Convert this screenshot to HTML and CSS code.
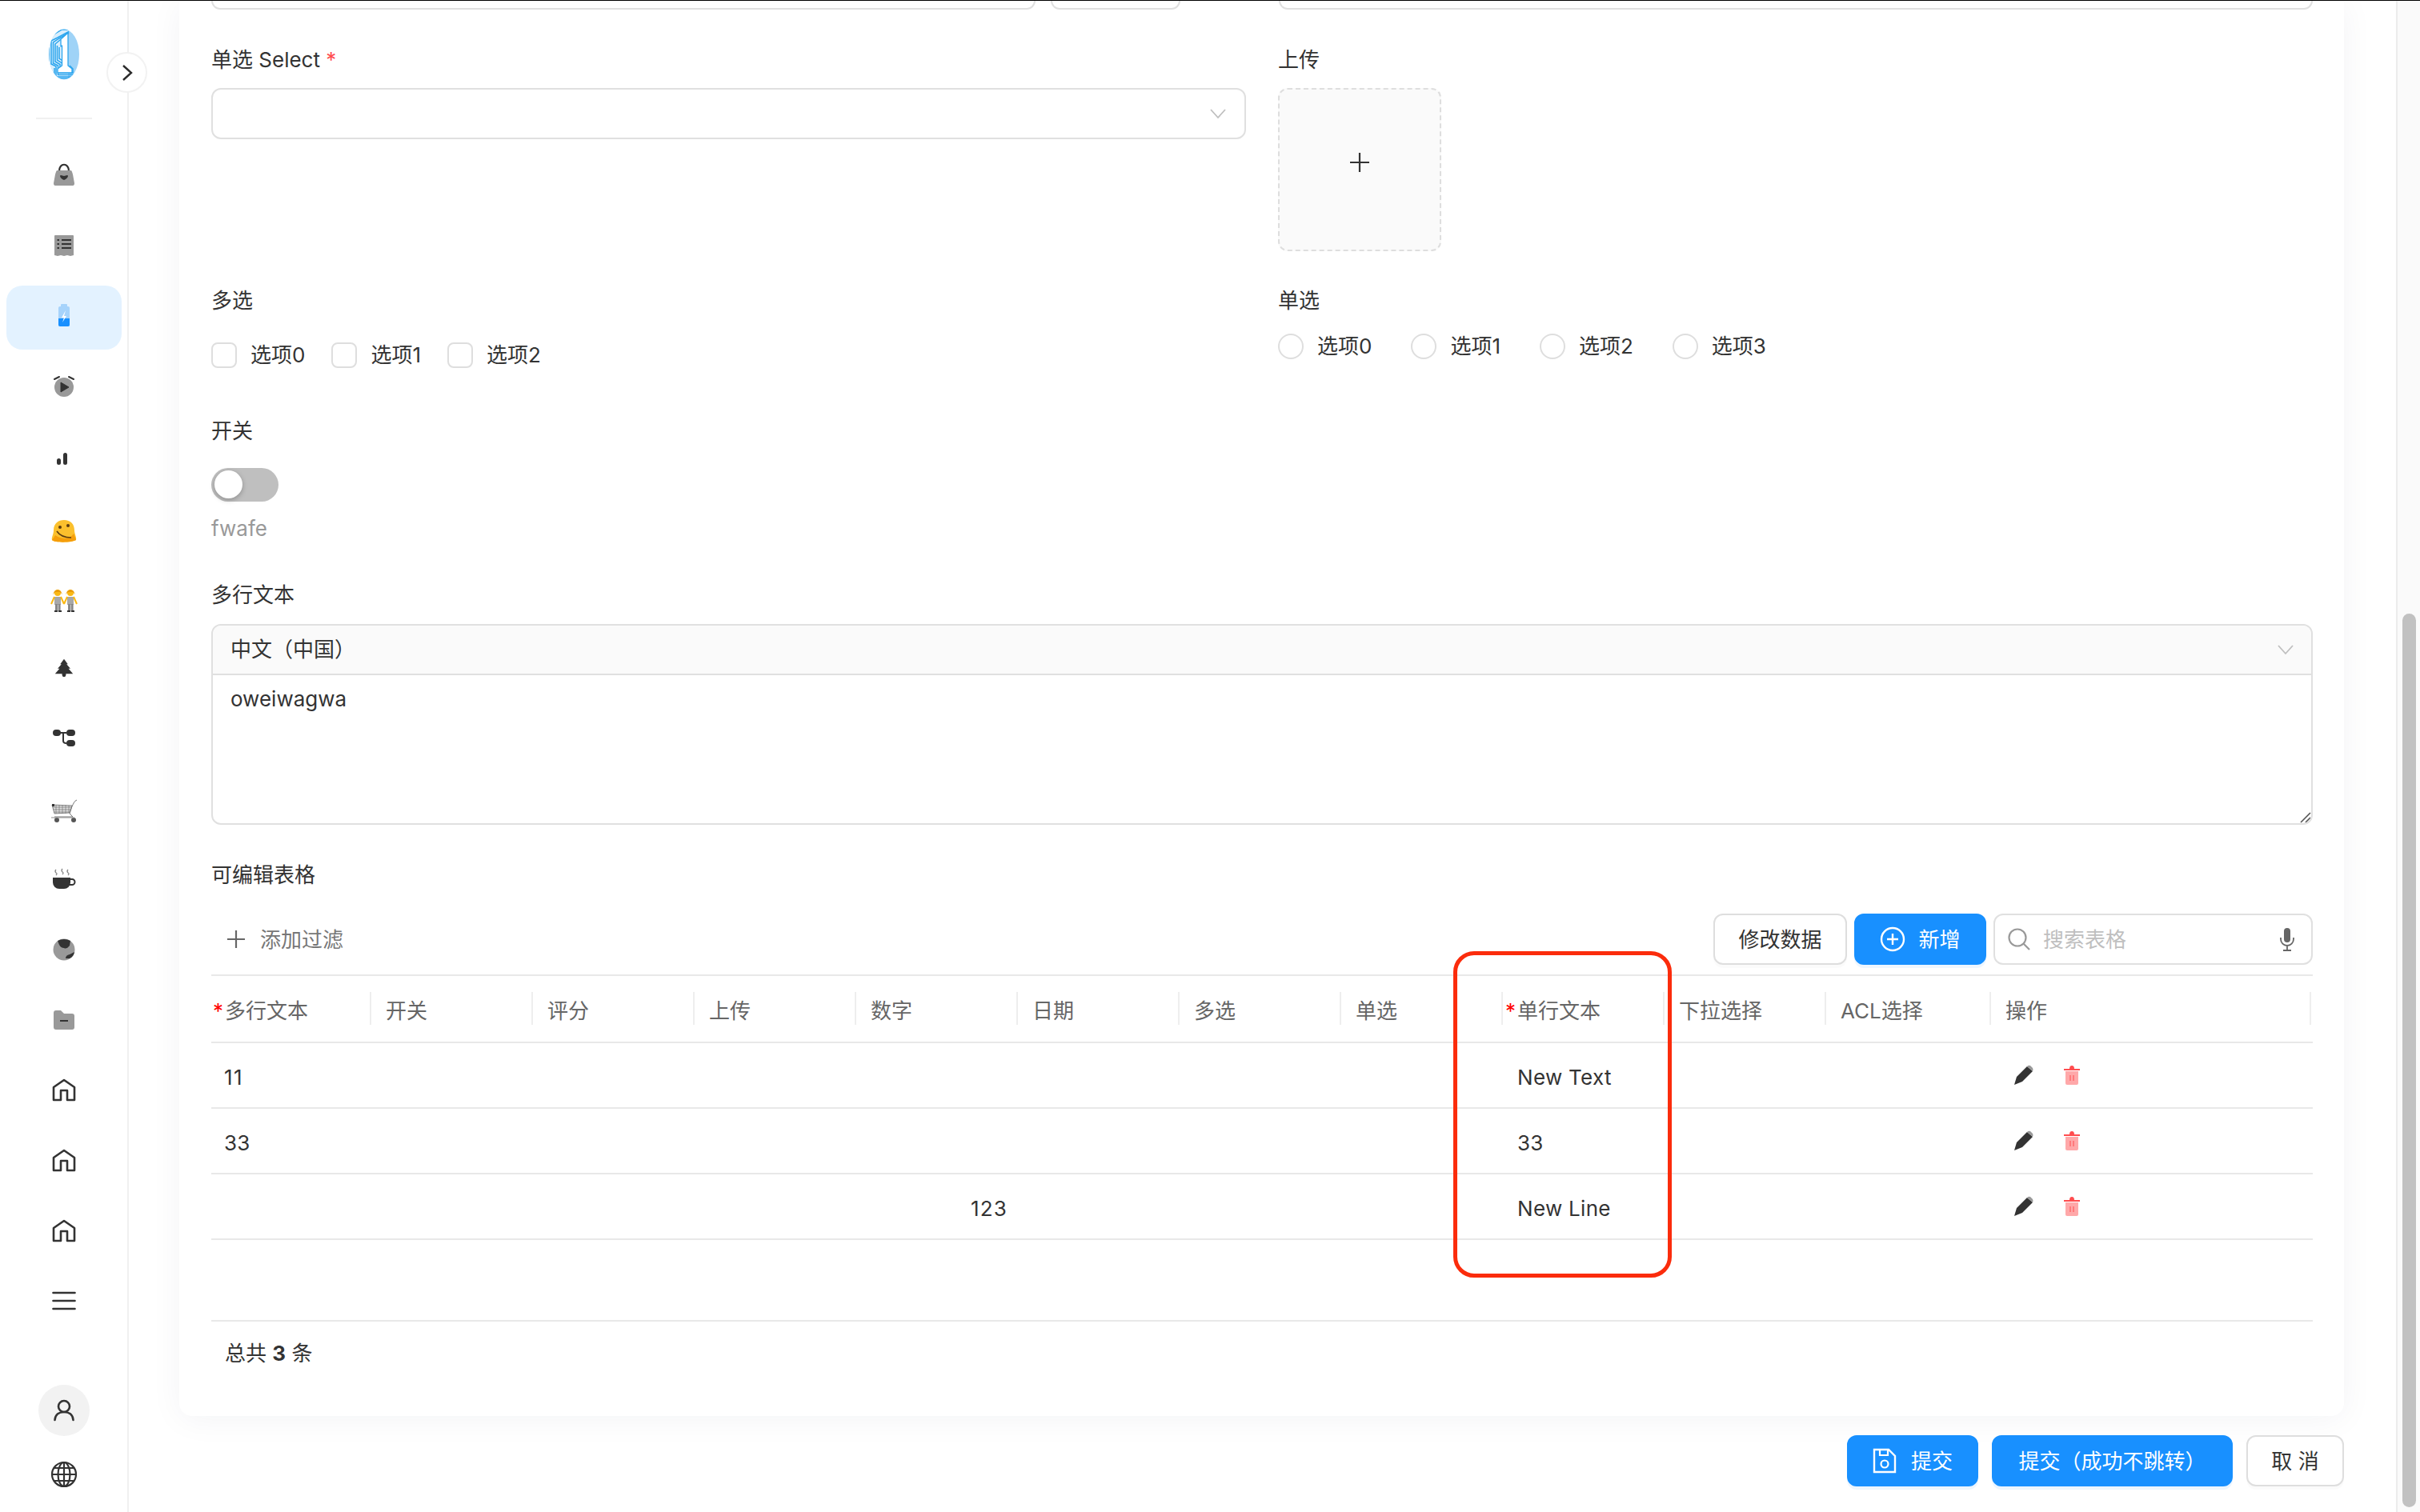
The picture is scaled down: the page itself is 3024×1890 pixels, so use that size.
FILE: index.html
```html
<!DOCTYPE html>
<html lang="zh-CN">
<head>
<meta charset="utf-8">
<title>表单</title>
<link rel="stylesheet" href="styles.css">
</head>
<body>
<div class="page">
  <aside class="sidebar">
    <div class="logo">
      <svg width="38" height="64" viewBox="0 0 38 64">
        <defs><clipPath id="logo-clip"><ellipse cx="19" cy="32" rx="19" ry="31.500"/></clipPath></defs>
        <g clip-path="url(#logo-clip)">
          <rect width="38" height="64" fill="#9fd3f7"/>
          <path d="M0 0 H24 V64 H0Z" fill="#d9eefc"/>
          <g fill="none" stroke="#2aa5ee" stroke-width="1.500">
            <path d="M27 1 H16 L1 10"/>
            <path d="M25 3.500 L11 11 L3 15 V44 L9 47 V60 H34"/>
            <path d="M25 5 L13 12 L5.500 17 V43 L11.500 46 V57.500 H32"/>
            <path d="M24 7 L14 14 L8 19 V41 L14 44.500 V55 H30 V50 L26 46"/>
            <path d="M10.500 21 V39 L16.500 43 V53 H28 V49"/>
            <path d="M13 23 V37 L19 41"/>
            <path d="M0 12 V42 M7 49 V62 H30"/>
          </g>
          <path d="M24 5 L15 13 V22 L16.500 21 V46 L11 50 V55 H29 V50 L24 46Z" fill="#fff" stroke="#2aa5ee" stroke-width="1.300" stroke-linejoin="round"/>
        </g>
      </svg>
    </div>
    <div class="side-divider"></div>
    <nav class="side-nav">
      <a class="side-item">
        <svg width="28" height="32" viewBox="0 0 28 32"><path d="M8 11 C8 0 20 0 20 11" fill="none" stroke="#333" stroke-width="2.200"/><path d="M6 10 H22 C24 10 24 12 25 15 L27 26 Q27 29 25 29 H3 Q1 29 1 26 L3 15 C4 12 4 10 6 10Z" fill="#999"/><path d="M14 22 C9 20 8 16 10 16 L14 17 L18 16 C20 16 19 20 14 22Z" fill="#333"/></svg>
      </a>
      <a class="side-item">
        <svg width="26" height="28" viewBox="0 0 26 28"><path d="M2 1 H24 Q25 1 25 2 V26 L21 27 L17 26 L13 27 L9 26 L5 27 L1 26 V2 Q1 1 2 1Z" fill="#999"/><path d="M10 7 H22 M10 12 H22 M10 17 H22" stroke="#333" stroke-width="2"/><path d="M4.500 7 H7 M4.500 12 H7 M4.500 17 H7" stroke="#333" stroke-width="2"/></svg>
      </a>
      <a class="side-item side-active">
        <svg width="30" height="34" viewBox="0 0 30 34"><rect x="11" y="2" width="8" height="5" rx="1" fill="#a6d3fb"/><rect x="8" y="5" width="14" height="25" rx="2" fill="#a6d3fb"/><path d="M8 20 H22 V28 A2 2 0 0 1 20 30 H10 A2 2 0 0 1 8 28Z" fill="#1890ff"/><path d="M17 10 L12 19 H15 L13 25 L18 17 H15Z" fill="#fff"/></svg>
      </a>
      <a class="side-item">
        <svg width="30" height="30" viewBox="0 0 30 30"><circle cx="15" cy="16" r="12" fill="#999"/><path d="M3 6 L9 3 M27 6 L21 3" stroke="#333" stroke-width="2" stroke-linecap="round"/><path d="M11 10 L21 16 L11 22Z" fill="#333" stroke="#333" stroke-linejoin="round"/></svg>
      </a>
      <a class="side-item">
        <svg width="30" height="30" viewBox="0 0 30 30"><rect x="6" y="17" width="5" height="8" rx="2.500" fill="#333"/><rect x="14" y="10" width="5" height="15" rx="2.500" fill="#333"/></svg>
      </a>
      <a class="side-item">
        <svg width="34" height="40" viewBox="0 -10 34 40"><path d="M4 14 C4 5 10 1 17 1 C25 1 30 6 30 14 C30 18 33 23 32 26 C28 29 6 30 2 26 C1 23 4 19 4 14Z" fill="#fbc02d"/><path d="M6 20 C4 24 2 25 2 26 C6 30 28 29 32 26 C32 24 30 21 29 18 C24 26 12 25 6 20Z" fill="#f59e0b"/><circle cx="12" cy="10" r="2" fill="#5c3c10"/><circle cx="22" cy="8" r="2" fill="#5c3c10"/><path d="M8 15 C12 21 20 23 26 23" fill="none" stroke="#5c3c10" stroke-width="1.600"/></svg>
      </a>
      <a class="side-item">
        <svg width="34" height="40" viewBox="0 -8 34 40"><circle cx="9" cy="6" r="4" fill="#fbb914"/><path d="M3 8 L5 4 L9 2 L13 4 L15 8 L12 5 H6Z" fill="#e89a0c"/><rect x="5" y="11" width="8" height="10" fill="#a8a8a8"/><rect x="6" y="20" width="3" height="9" fill="#888"/><rect x="9.600" y="20" width="3" height="9" fill="#888"/><rect x="5" y="28" width="4" height="2" fill="#333"/><rect x="10" y="28" width="4" height="2" fill="#333"/><path d="M5 11 L1 20 M13 11 L17 20" stroke="#fbb914" stroke-width="2"/><g transform="translate(16)"><circle cx="9" cy="6" r="4" fill="#fbb914"/><path d="M3 8 L5 4 L9 2 L13 4 L15 8 L12 5 H6Z" fill="#e89a0c"/><rect x="5" y="11" width="8" height="10" fill="#a8a8a8"/><rect x="6" y="20" width="3" height="9" fill="#888"/><rect x="9.600" y="20" width="3" height="9" fill="#888"/><rect x="5" y="28" width="4" height="2" fill="#333"/><rect x="10" y="28" width="4" height="2" fill="#333"/><path d="M5 11 L1 20 M13 11 L17 20" stroke="#fbb914" stroke-width="2"/></g></svg>
      </a>
      <a class="side-item">
        <svg width="24" height="26" viewBox="0 0 30 30"><path d="M15 1 L21 9 H19 L25 16 H22 L29 24 H18 V26 A3 3 0 0 1 12 26 V24 H1 L8 16 H5 L11 9 H9Z" fill="#333"/></svg>
      </a>
      <a class="side-item">
        <svg width="30" height="30" viewBox="0 0 30 30"><rect x="1" y="4" width="10" height="8" rx="4" fill="#333"/><rect x="18" y="4" width="11" height="8" rx="4" fill="#333"/><rect x="18" y="17" width="11" height="8" rx="4" fill="#333"/><path d="M10 8 H18 M14 8 V18 Q14 21 18 21" fill="none" stroke="#333" stroke-width="2"/></svg>
      </a>
      <a class="side-item">
        <svg width="34" height="38" viewBox="0 -8 34 38"><path d="M33 0 C30 1 29 4 27 8 L24 17 L28 21 H5" fill="none" stroke="#777" stroke-width="1"/><path d="M2 6 L27 7 L24 16 L5 17Z" fill="#ddd" stroke="#666" stroke-width=".8"/><path d="M7 6 V17 M11 6 V17 M15 6 V17 M19 6 V17 M23 7 V16 M3 9 H26 M4 12 H25 M4 15 H24" stroke="#777" stroke-width=".7"/><rect x="2" y="5" width="3" height="3" fill="#333"/><circle cx="8" cy="25" r="3" fill="#555"/><circle cx="29" cy="25" r="3" fill="#555"/><path d="M1 22 H30" stroke="#888"/></svg>
      </a>
      <a class="side-item">
        <svg width="30" height="32" viewBox="0 0 30 32"><path d="M5 4 Q3 6 5 8 Q7 9 5 11 M13 3 Q11 5 13 7 Q15 8 13 10 M20 4 Q18 6 20 8 Q22 9 20 11" fill="none" stroke="#888" stroke-width="1.300"/><path d="M1 14 H23 V20 A8 8 0 0 1 15 28 H9 A8 8 0 0 1 1 20Z" fill="#333"/><path d="M23 16 H25 A3.500 3.500 0 0 1 25 23 H20" fill="none" stroke="#333" stroke-width="2"/></svg>
      </a>
      <a class="side-item">
        <svg width="30" height="30" viewBox="0 0 30 30"><circle cx="15" cy="15" r="13.500" fill="#999"/><path d="M7 4 Q15 0 23 4 L22 10 Q18 15 15 13 Q11 13 9 9Z" fill="#333"/><path d="M17 26 Q17 22 22 21 L28 18 Q27 24 22 26Z" fill="#333"/></svg>
      </a>
      <a class="side-item">
        <svg width="30" height="30" viewBox="0 0 30 30"><path d="M2 6 A3 3 0 0 1 5 3 H11 L15 7 H25 A3 3 0 0 1 28 10 V24 A3 3 0 0 1 25 27 H5 A3 3 0 0 1 2 24Z" fill="#999"/><path d="M10 16 H20" stroke="#333" stroke-width="2"/></svg>
      </a>
      <a class="side-item"><svg width="30" height="30" viewBox="0 0 30 30"><path d="M2 27 V11 L15 2 L28 11 V27 H19 V15 H11 V27Z" fill="none" stroke="#333" stroke-width="2.600" stroke-linejoin="round"/></svg></a>
      <a class="side-item"><svg width="30" height="30" viewBox="0 0 30 30"><path d="M2 27 V11 L15 2 L28 11 V27 H19 V15 H11 V27Z" fill="none" stroke="#333" stroke-width="2.600" stroke-linejoin="round"/></svg></a>
      <a class="side-item"><svg width="30" height="30" viewBox="0 0 30 30"><path d="M2 27 V11 L15 2 L28 11 V27 H19 V15 H11 V27Z" fill="none" stroke="#333" stroke-width="2.600" stroke-linejoin="round"/></svg></a>
      <a class="side-item"><svg width="30" height="30" viewBox="0 0 30 30"><path d="M1.500 4 H28.500 M1.500 14 H28.500 M1.500 24 H28.500" stroke="#333" stroke-width="2.600" stroke-linecap="round"/></svg></a>
    </nav>
    <div class="side-bottom">
      <div class="avatar"><svg width="28" height="28" viewBox="0 0 28 28"><circle cx="14" cy="9" r="7" fill="none" stroke="#333" stroke-width="2.600"/><path d="M2.500 26 C3 19 8 16 14 16 C20 16 25 19 25.500 26" fill="none" stroke="#333" stroke-width="2.600" stroke-linecap="round"/></svg></div>
      <svg width="34" height="34" viewBox="0 0 34 34"><g fill="none" stroke="#333" stroke-width="2.200"><circle cx="17" cy="17" r="15"/><ellipse cx="17" cy="17" rx="7.500" ry="15"/><path d="M17 2 V32 M2 17 H32 M5 9 H29 M5 25 H29"/></g></svg>
    </div>
  </aside>
  <button class="collapse" type="button" aria-label="展开"><svg width="18" height="24" viewBox="0 0 18 24"><path d="M4 3 L14 12 L4 21" fill="none" stroke="#2b2b2b" stroke-width="2.400"/></svg></button>

  <main class="main">
    <section class="card">
      <div class="clip-row">
        <div class="clip-input clip-a"></div>
        <div class="clip-input clip-b"></div>
        <div class="clip-input clip-c"></div>
      </div>

      <div class="two-col row-select">
        <div>
          <div class="label lb-select">单选 Select <span class="req">*</span></div>
          <div class="select"><svg width="22" height="14" viewBox="0 0 22 14"><path d="M2 2 L11 12 L20 2" fill="none" stroke="#bfbfbf" stroke-width="1.800"/></svg></div>
        </div>
        <div>
          <div class="label lb-select">上传</div>
          <div class="upload"><svg width="24" height="24" viewBox="0 0 24 24"><path d="M12 0 V24 M0 12 H24" stroke="#333" stroke-width="2.200"/></svg></div>
        </div>
      </div>

      <div class="two-col row-choice">
        <div>
          <div class="label">多选</div>
          <div class="checks">
            <label class="opt"><span class="check"></span>选项0</label>
            <label class="opt"><span class="check"></span>选项1</label>
            <label class="opt"><span class="check"></span>选项2</label>
          </div>
        </div>
        <div>
          <div class="label">单选</div>
          <div class="radios">
            <label class="opt"><span class="radio"></span>选项0</label>
            <label class="opt"><span class="radio"></span>选项1</label>
            <label class="opt"><span class="radio"></span>选项2</label>
            <label class="opt"><span class="radio"></span>选项3</label>
          </div>
        </div>
      </div>

      <div class="label lb-switch">开关</div>
      <div class="switch"><span class="knob"></span></div>
      <div class="hint">fwafe</div>

      <div class="label lb-text">多行文本</div>
      <div class="editor">
        <div class="editor-head"><span>中文（中国）</span><svg width="22" height="14" viewBox="0 0 22 14"><path d="M2 2 L11 12 L20 2" fill="none" stroke="#bfbfbf" stroke-width="1.800"/></svg></div>
        <div class="editor-body">oweiwagwa<svg class="grip" width="16" height="16" viewBox="0 0 16 16"><path d="M15 3 L3 15 M15 9 L9 15" stroke="#555" stroke-width="1.600"/></svg></div>
      </div>

      <div class="label lb-table">可编辑表格</div>
      <div class="toolbar">
        <div class="filter"><svg width="24" height="24" viewBox="0 0 24 24"><path d="M12 1 V23 M1 12 H23" stroke="#666" stroke-width="2.200"/></svg><span>添加过滤</span></div>
        <div class="tools">
          <button class="btn btn-edit" type="button">修改数据</button>
          <button class="btn btn-primary btn-new" type="button"><svg width="32" height="32" viewBox="0 0 32 32"><circle cx="16" cy="16" r="14" fill="none" stroke="#fff" stroke-width="2.400"/><path d="M16 9 V23 M9 16 H23" stroke="#fff" stroke-width="2.400"/></svg>新增</button>
          <div class="search">
            <svg width="30" height="30" viewBox="0 0 30 30"><circle cx="13" cy="13" r="10.500" fill="none" stroke="#999" stroke-width="2.200"/><path d="M20.500 20.500 L28 28" stroke="#999" stroke-width="2.200"/></svg>
            <span class="placeholder">搜索表格</span>
            <svg width="22" height="30" viewBox="0 0 22 30"><rect x="7" y="1" width="8" height="18" rx="4" fill="#666"/><path d="M3 13 V15 A8 8 0 0 0 19 15 V13 M11 23 V28 M6 29 H16" fill="none" stroke="#666" stroke-width="1.800"/></svg>
          </div>
        </div>
      </div>

      <div class="table">
        <div class="thead">
          <div class="th"><span class="star">*</span>多行文本</div>
          <div class="th">开关</div>
          <div class="th">评分</div>
          <div class="th">上传</div>
          <div class="th">数字</div>
          <div class="th">日期</div>
          <div class="th">多选</div>
          <div class="th">单选</div>
          <div class="th"><span class="star">*</span>单行文本</div>
          <div class="th">下拉选择</div>
          <div class="th">ACL选择</div>
          <div class="th">操作</div>
        </div>
        <div class="tr">
          <div class="td td-digits">11</div><div class="td"></div><div class="td"></div><div class="td"></div><div class="td"></div><div class="td"></div><div class="td"></div><div class="td"></div>
          <div class="td">New Text</div><div class="td"></div><div class="td"></div>
          <div class="td-ops">
            <svg width="26" height="26" viewBox="0 0 26 26"><path d="M1 25 L4 15 L17 2 L24 8 L11 21Z" fill="#333"/><path d="M17 2 Q19 0 21 1 L24 4 Q25 6 24 8Z" fill="#999"/></svg>
            <svg width="22" height="26" viewBox="0 0 22 26"><path d="M8 5 Q8 1 11 1 Q14 1 14 5Z" fill="#ff4d4f"/><path d="M1 6 H21" stroke="#ff4d4f" stroke-width="2"/><path d="M3 8 H19 V23 Q19 25 17 25 H5 Q3 25 3 23Z" fill="#ffa8a9"/><path d="M9 13 V20 M13 13 V20" stroke="#ff4d4f" stroke-width="1"/></svg>
          </div>
        </div>
        <div class="tr">
          <div class="td">33</div><div class="td"></div><div class="td"></div><div class="td"></div><div class="td"></div><div class="td"></div><div class="td"></div><div class="td"></div>
          <div class="td">33</div><div class="td"></div><div class="td"></div>
          <div class="td-ops">
            <svg width="26" height="26" viewBox="0 0 26 26"><path d="M1 25 L4 15 L17 2 L24 8 L11 21Z" fill="#333"/><path d="M17 2 Q19 0 21 1 L24 4 Q25 6 24 8Z" fill="#999"/></svg>
            <svg width="22" height="26" viewBox="0 0 22 26"><path d="M8 5 Q8 1 11 1 Q14 1 14 5Z" fill="#ff4d4f"/><path d="M1 6 H21" stroke="#ff4d4f" stroke-width="2"/><path d="M3 8 H19 V23 Q19 25 17 25 H5 Q3 25 3 23Z" fill="#ffa8a9"/><path d="M9 13 V20 M13 13 V20" stroke="#ff4d4f" stroke-width="1"/></svg>
          </div>
        </div>
        <div class="tr">
          <div class="td"></div><div class="td"></div><div class="td"></div><div class="td"></div><div class="td td-num">123</div><div class="td"></div><div class="td"></div><div class="td"></div>
          <div class="td">New Line</div><div class="td"></div><div class="td"></div>
          <div class="td-ops">
            <svg width="26" height="26" viewBox="0 0 26 26"><path d="M1 25 L4 15 L17 2 L24 8 L11 21Z" fill="#333"/><path d="M17 2 Q19 0 21 1 L24 4 Q25 6 24 8Z" fill="#999"/></svg>
            <svg width="22" height="26" viewBox="0 0 22 26"><path d="M8 5 Q8 1 11 1 Q14 1 14 5Z" fill="#ff4d4f"/><path d="M1 6 H21" stroke="#ff4d4f" stroke-width="2"/><path d="M3 8 H19 V23 Q19 25 17 25 H5 Q3 25 3 23Z" fill="#ffa8a9"/><path d="M9 13 V20 M13 13 V20" stroke="#ff4d4f" stroke-width="1"/></svg>
          </div>
        </div>
      </div>
      <div class="total">总共 <b>3</b> 条</div>
    </section>

    <div class="actions">
      <button class="btn btn-primary btn-save" type="button"><svg width="30" height="32" viewBox="0 0 30 32"><path d="M2 2 H20 L28 10 V30 H2Z" fill="none" stroke="#fff" stroke-width="2.400"/><path d="M9 2 V9 H19 V2" fill="none" stroke="#fff" stroke-width="2.200"/><circle cx="15" cy="20" r="4.500" fill="none" stroke="#fff" stroke-width="2.200"/></svg>提交</button>
      <button class="btn btn-primary btn-wide" type="button">提交（成功不跳转）</button>
      <button class="btn btn-cancel" type="button">取 消</button>
    </div>
  </main>
  <div class="scrollbar"><div class="thumb"></div></div>
  <div class="annotation"></div>
</div>
</body>
</html>
```
FILE: styles.css
```css
* { box-sizing: border-box; }
html, body { margin: 0; height: 100%; background: #fff; overflow: hidden; }
body {
  font-family: Inter, "Noto Sans CJK SC", "Noto Sans", sans-serif;
  font-size: 26px;
  line-height: 36px;
  color: #333;
}
button { font: inherit; cursor: pointer; }
.page {
  position: relative;
  display: flex;
  height: 1890px;
  width: 3024px;
  border-top: 1px solid #000;
  overflow: hidden;
}

/* sidebar */
.sidebar {
  width: 161px;
  flex: none;
  display: flex;
  flex-direction: column;
  align-items: center;
  background: #fff;
  border-right: 2px solid #f0f0f0;
  padding-bottom: 30px;
}
.logo { height: 64px; margin-top: 35px; }
.logo svg { display: block; }
.side-divider { width: 70px; height: 2px; background: #f0f0f0; margin-top: 47px; }
.side-nav { display: flex; flex-direction: column; margin-top: 26px; width: 100%; }
.side-item { height: 88px; display: flex; align-items: center; justify-content: center; width: 144px; margin-left: 8px; border-radius: 20px; }
.side-active { background: #e3f2ff; height: 80px; margin: 6px 0 2px 8px; padding-bottom: 4px; }
.side-bottom { margin-top: auto; display: flex; flex-direction: column; align-items: center; gap: 31px; }
.side-bottom svg { display: block; }
.avatar { width: 64px; height: 64px; border-radius: 50%; background: #f2f2f2; display: flex; align-items: center; justify-content: center; }
.collapse {
  position: absolute;
  left: 133px;
  top: 64px;
  width: 51px;
  height: 51px;
  border-radius: 50%;
  border: 2px solid #f2f2f2;
  background: #fff;
  display: flex;
  align-items: center;
  justify-content: center;
  padding: 0;
}

/* main */
.main { flex: 1; padding-left: 63px; padding-right: 65px; min-width: 0; }
.card {
  height: 1769px;
  padding: 0 39px 0 40px;
  background: #fff;
  border-radius: 0 0 16px 16px;
  box-shadow: 0 4px 40px rgba(20, 40, 80, .05);
}
.clip-row { display: flex; height: 11px; }
.clip-input { height: 11px; border: 2px solid #e0e0e0; border-top: 0; border-radius: 0 0 12px 12px; }
.clip-a { width: 1030px; }
.clip-b { width: 162px; margin-left: 19px; }
.clip-c { width: 1292px; margin-left: auto; }
.two-col { display: grid; grid-template-columns: 1293px 1293px; column-gap: 40px; }
.row-select { margin-top: 43px; }
.row-choice { margin-top: 44px; }
.label { height: 36px; color: #333; }
.lb-select { margin-bottom: 19px; padding-top: 2px; }
.req { color: #ff4d4f; }
.select {
  height: 64px;
  border: 2px solid #e0e0e0;
  border-radius: 12px;
  display: flex;
  align-items: center;
  justify-content: flex-end;
  padding-right: 22px;
}
.upload {
  width: 204px;
  height: 204px;
  border: 2px dashed #dedede;
  border-radius: 12px;
  background: #fafafa;
  display: flex;
  align-items: center;
  justify-content: center;
  padding-bottom: 18px;
}
.checks { display: flex; margin-top: 34px; height: 32px; }
.radios { display: flex; margin-top: 23px; height: 32px; }
.opt { display: flex; align-items: center; white-space: nowrap; }
.check, .radio { width: 32px; height: 32px; border: 2px solid #dedede; background: #fff; flex: none; }
.check { border-radius: 8px; margin-right: 17px; }
.checks .opt { margin-right: 33px; }
.radio { border-radius: 50%; margin-right: 17px; }
.radios .opt { margin-right: 49px; }
.lb-switch { margin-top: 61px; }
.switch { margin-top: 28px; width: 84px; height: 42px; border-radius: 21px; background: #bfbfbf; position: relative; }
.knob { position: absolute; left: 4px; top: 3px; width: 35px; height: 35px; border-radius: 50%; background: #fff; box-shadow: 0 2px 6px rgba(0, 0, 0, .25); }
.hint { margin-top: 16px; height: 36px; color: #999; }
.lb-text { margin-top: 47px; }
.editor { margin-top: 18px; height: 251px; border: 2px solid #e0e0e0; border-radius: 12px; overflow: hidden; display: flex; flex-direction: column; }
.editor-head { height: 62px; flex: none; background: #fafafa; border-bottom: 2px solid #e0e0e0; display: flex; align-items: center; justify-content: space-between; padding: 0 21px 0 22px; }
.editor-body { flex: 1; position: relative; padding: 12px 22px; }
.grip { position: absolute; right: 0; bottom: 0; }
.lb-table { margin-top: 43px; padding-top: 2px; }
.toolbar { margin-top: 32px; height: 78px; padding-bottom: 13px; border-bottom: 2px solid #e8e8e8; display: flex; justify-content: space-between; align-items: center; }
.filter { display: flex; align-items: center; gap: 18px; color: #777; padding-left: 19px; }
.filter svg { display: block; }
.filter span { padding-top: 2px; }
.tools { display: flex; gap: 9px; }
.btn { height: 64px; padding: 2px 0 0; border-radius: 12px; border: 2px solid #dedede; background: #fff; color: #333; display: inline-flex; align-items: center; justify-content: center; white-space: nowrap; box-shadow: 0 4px 0 rgba(0, 0, 0, .015); }
.btn svg { margin-top: -2px; }
.btn-primary { background: #1890ff; border-color: #1890ff; color: #fff; box-shadow: 0 4px 0 rgba(24, 144, 255, .08); }
.btn-edit { width: 167px; }
.btn-new { width: 165px; gap: 16px; }
.search { width: 399px; height: 64px; border: 2px solid #e0e0e0; border-radius: 12px; display: flex; align-items: center; gap: 15px; padding: 0 19px 0 15px; }
.search svg { display: block; flex: none; }
.placeholder { color: #bfbfbf; flex: 1; padding-top: 2px; }

/* table */
.table { width: 100%; }
.thead, .tr { display: grid; grid-template-columns: 200px repeat(9, 202px) 206px 1fr; }
.thead { height: 84px; border-bottom: 2px solid #e8e8e8; align-items: center; }
.th { position: relative; color: #666; padding-left: 18px; height: 42px; line-height: 47px; white-space: nowrap; }
.thead .th:first-child { padding-left: 17px; }
.th::after { content: ""; position: absolute; right: 0; top: 0; width: 2px; height: 41px; background: #eeeeee; }
.thead .th:last-child::after { right: 2px; }
.star { position: absolute; margin-left: -15px; color: #f00; }
.tr { height: 82px; border-bottom: 2px solid #e8e8e8; align-items: center; }
.td { padding: 3px 0 0 18px; height: 36px; white-space: nowrap; letter-spacing: .3px; }
.tr .td:first-child { padding-left: 16px; }
.td-digits { letter-spacing: 1.500px; }
.td-num { text-align: right; padding-right: 13px; letter-spacing: 1.200px; }
.td-ops { display: flex; align-items: center; gap: 36px; padding-left: 28px; }
.td-ops svg { display: block; flex: none; }
.total { margin-top: 100px; border-top: 2px solid #e8e8e8; height: 80px; padding: 22px 0 0 17px; }
.total b { font-weight: 700; }

/* actions */
.actions { display: flex; justify-content: flex-end; gap: 17px; margin-top: 24px; }
.btn-save { width: 164px; gap: 18px; }
.btn-wide { width: 301px; }
.btn-cancel { width: 122px; }

/* scrollbar */
.scrollbar { width: 30px; flex: none; background: #fafafa; border-left: 2px solid #ececec; padding: 766px 5px 6px 6px; }
.thumb { height: 100%; width: 17px; border-radius: 9px; background: #c1c1c1; }

/* red annotation drawn over the screenshot */
.annotation { position: absolute; left: 1816px; top: 1188px; width: 273px; height: 408px; border: 5px solid #fb2c0c; border-radius: 26px; pointer-events: none; }
```
